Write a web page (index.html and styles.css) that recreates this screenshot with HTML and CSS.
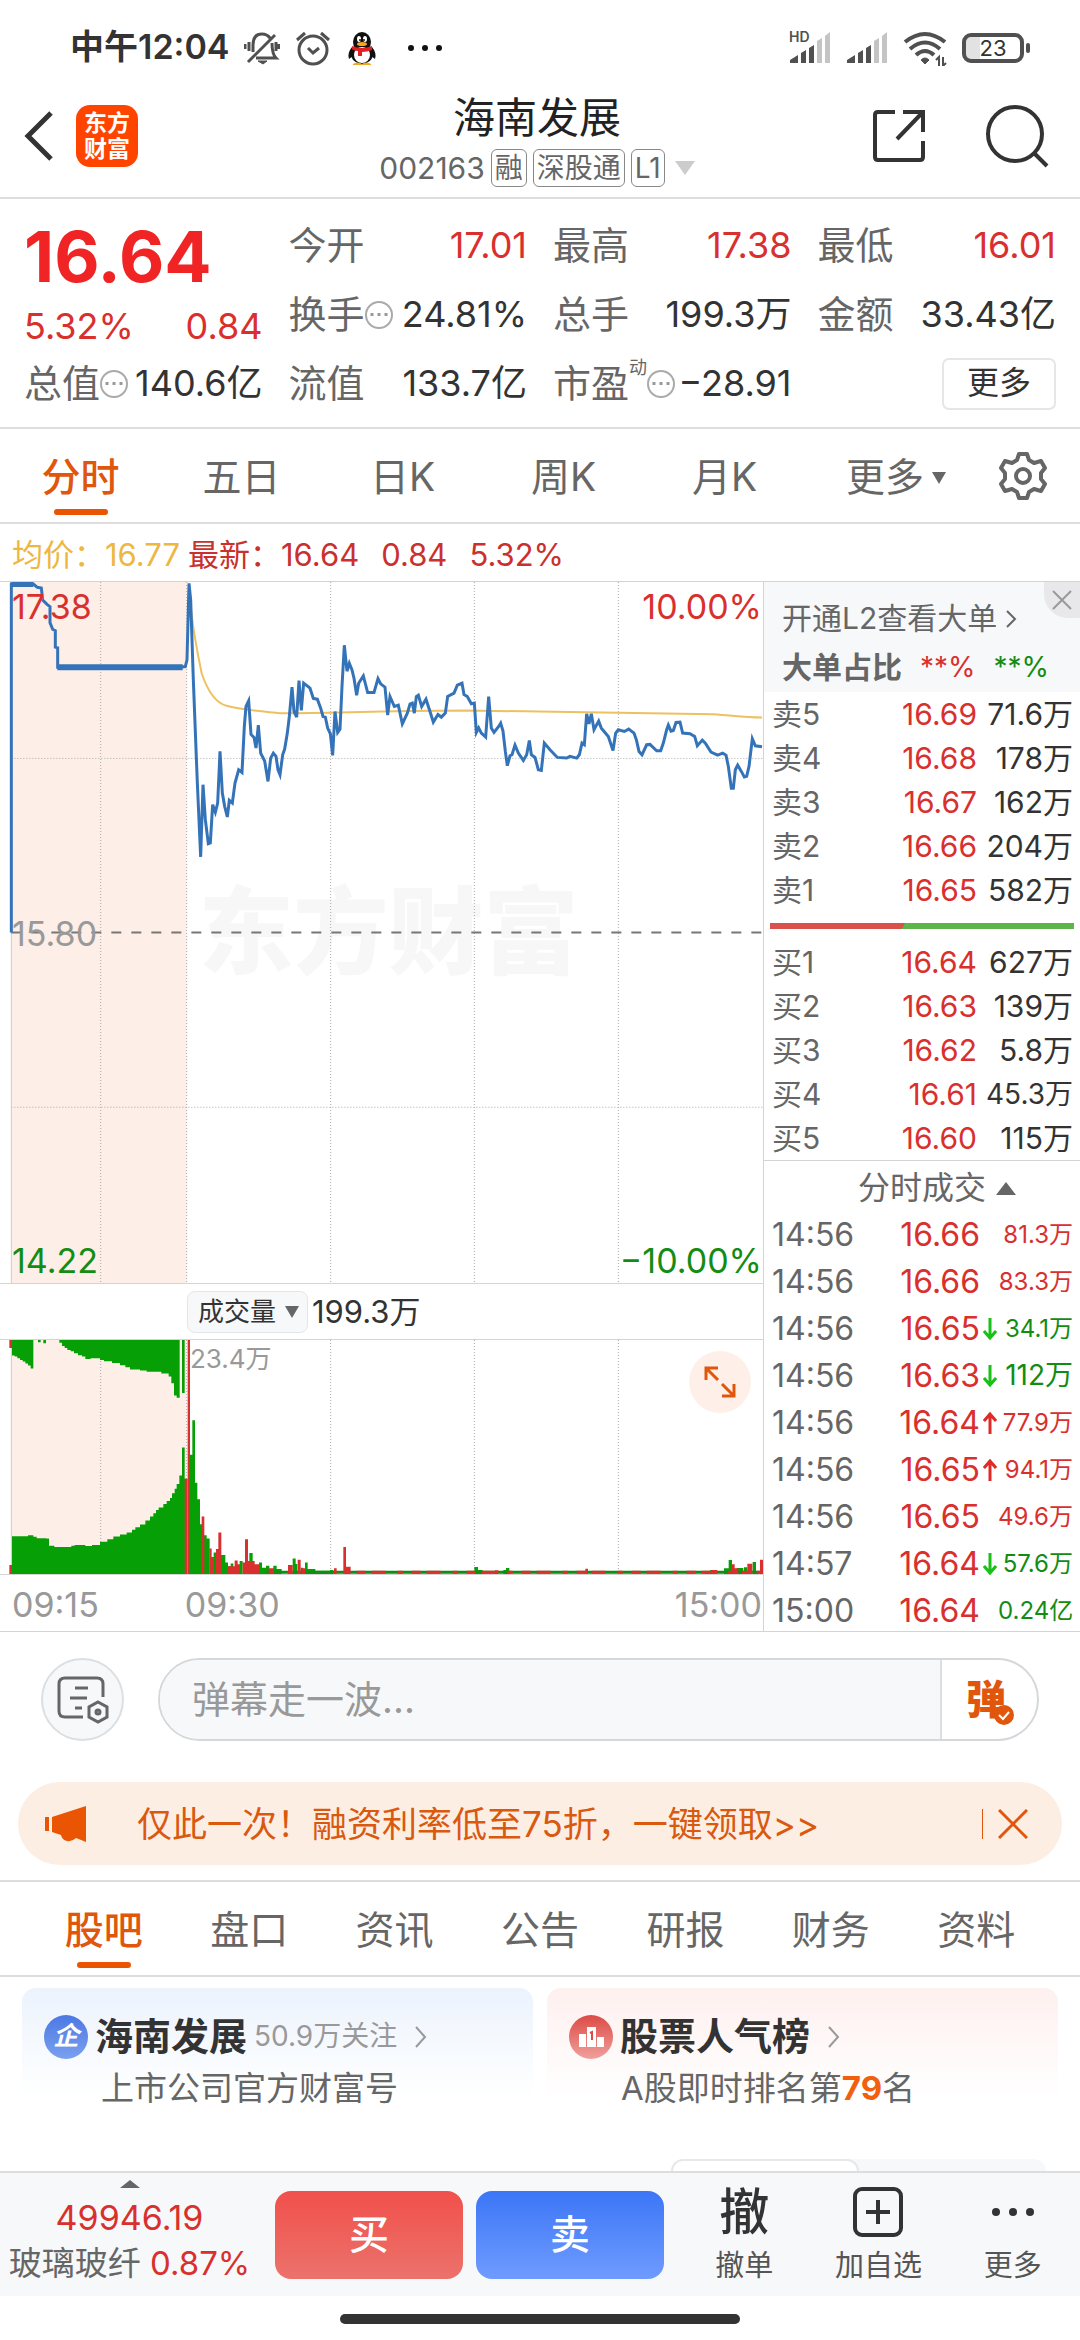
FILE: index.html
```html
<!DOCTYPE html>
<html lang="zh-CN">
<head>
    <meta charset="UTF-8">
    <meta name="viewport" content="width=device-width, initial-scale=1.0">
    <title>海南发展 002163</title>
    <link rel="stylesheet" href="styles.css">
</head>
<body>
    <!-- Status bar -->
    <div class="status">
        <div class="status-side">
            <span class="clock">中午12:04</span>
            <svg width="36" height="36" viewBox="0 0 36 36" fill="none" stroke="#505050" stroke-width="3">
                <path d="M9 22V15C9 7 13 4 18 4q5 0 8 4M28 13c0 8 1 12 4 15H12M31 5L4 32M5 12v9M1 14v5M32 12v9M35 14v5"/>
                <path d="M14 31h9l-4 3z" fill="#505050" stroke-width="1"/>
            </svg>
            <svg width="36" height="36" viewBox="0 0 36 36" fill="none" stroke="#505050" stroke-width="3">
                <circle cx="18" cy="20" r="14"/>
                <path d="M2 10l8-7M34 10l-8-7M13 18l5 5 6-5"/>
            </svg>
            <svg width="32" height="36" viewBox="0 0 32 36">
                <path d="M6 17q-5 6-3 12l4-3zM26 17q5 6 3 12l-4-3z" fill="#111"/>
                <ellipse cx="16" cy="24" rx="11" ry="10" fill="#111"/>
                <ellipse cx="16" cy="12" rx="9" ry="10" fill="#111"/>
                <ellipse cx="16" cy="25" rx="8" ry="8" fill="#fff"/>
                <ellipse cx="13" cy="9" rx="2" ry="3" fill="#fff"/>
                <ellipse cx="19" cy="9" rx="2" ry="3" fill="#fff"/>
                <circle cx="14" cy="10" r="1" fill="#111"/>
                <circle cx="18" cy="10" r="1" fill="#111"/>
                <ellipse cx="16" cy="14" rx="5" ry="2" fill="#f5a623"/>
                <path d="M6 16q10 4 20 0v4q-5 2-10 2v4h-4v-5q-4 0-6-2z" fill="#e02020"/>
                <path d="M7 34q4-3 9 0 5-3 9 0v1H7z" fill="#f5a623"/>
            </svg>
            <svg class="status-dots" width="36" height="36" viewBox="0 0 36 36" fill="#111">
                <circle cx="4" cy="18" r="3"/><circle cx="18" cy="18" r="3"/><circle cx="32" cy="18" r="3"/>
            </svg>
        </div>
        <div class="status-side">
            <div class="signal">
                <span class="hd">HD</span>
                <svg width="42" height="36" viewBox="0 0 42 36">
                    <path d="M1 33v-3l8-5v8zM12 33V23l5-3v13zM20 33V18l5-3v18z" fill="#505050"/>
                    <path d="M28 33V11l5-3v25zM36 33V6l5-4v31z" fill="#c4c4c4"/>
                </svg>
            </div>
            <svg width="42" height="36" viewBox="0 0 42 36">
                <path d="M1 33v-3l8-5v8zM12 33V23l5-3v13zM20 33V18l5-3v18z" fill="#505050"/>
                <path d="M28 33V11l5-3v25zM36 33V6l5-4v31z" fill="#c4c4c4"/>
            </svg>
            <svg width="44" height="36" viewBox="0 0 44 36" fill="none" stroke="#505050" stroke-width="4">
                <path d="M2 12q20-16 40 0M7 19q15-13 30 0M13 25q9-8 18 0"/>
                <path d="M18 30q4-4 8 0l-4 4z" fill="#505050" stroke-width="1"/>
                <path d="M36 36v-9l-3 3M40 27v9l3-3" stroke-width="2"/>
            </svg>
            <div class="battery">23</div>
        </div>
    </div>

    <!-- Title -->
    <header class="header">
        <div class="header-left">
            <button class="icon-btn" aria-label="返回">
                <svg width="30" height="52" viewBox="0 0 30 52" fill="none" stroke="#333" stroke-width="5"><path d="M27 3L4 26l23 23"/></svg>
            </button>
            <a class="logo" href="#"><span>东方</span><span>财富</span></a>
        </div>
        <div class="title">
            <h1>海南发展</h1>
            <div class="subtitle">
                <span class="code">002163</span>
                <span class="badge">融</span>
                <span class="badge">深股通</span>
                <span class="badge">L1</span>
                <i class="tri-down tri-light"></i>
            </div>
        </div>
        <div class="header-right">
            <button class="icon-btn" aria-label="分享">
                <svg width="56" height="56" viewBox="0 0 56 56" fill="none" stroke="#333" stroke-width="4">
                    <path d="M23 4H6q-3 0-3 3v42q0 3 3 3h42q3 0 3-3V33M31 4h20v20M51 4L25 31"/>
                </svg>
            </button>
            <button class="icon-btn" aria-label="搜索">
                <svg width="66" height="66" viewBox="0 0 66 66" fill="none" stroke="#333" stroke-width="4">
                    <circle cx="31" cy="31" r="27"/><path d="M50 50l13 13"/>
                </svg>
            </button>
        </div>
    </header>

    <!-- Quote -->
    <section class="quote">
        <div class="price-box">
            <strong class="price">16.64</strong>
            <div class="change"><span>5.32%</span><span>0.84</span></div>
        </div>
        <div class="item"><span class="name">今开</span><span class="up">17.01</span></div>
        <div class="item"><span class="name">最高</span><span class="up">17.38</span></div>
        <div class="item"><span class="name">最低</span><span class="up">16.01</span></div>
        <div class="item"><span class="name">换手<i class="hint"></i></span><span>24.81%</span></div>
        <div class="item"><span class="name">总手</span><span>199.3万</span></div>
        <div class="item"><span class="name">金额</span><span>33.43亿</span></div>
        <div class="item"><span class="name">总值<i class="hint"></i></span><span>140.6亿</span></div>
        <div class="item"><span class="name">流值</span><span>133.7亿</span></div>
        <div class="item"><span class="name">市盈<sup>动</sup><i class="hint"></i></span><span>−28.91</span></div>
        <div class="item item-end"><button class="more-btn">更多</button></div>
    </section>

    <nav class="tabs">
        <button class="tab active">分时</button>
        <button class="tab">五日</button>
        <button class="tab">日K</button>
        <button class="tab">周K</button>
        <button class="tab">月K</button>
        <button class="tab tab-more">更多<i class="tri-down tri-small"></i></button>
        <button class="gear" aria-label="设置">
            <svg width="50" height="50" viewBox="0 0 50 50" fill="none" stroke="#666" stroke-width="4" stroke-linejoin="round">
                <path d="M21 3h8l2 6 5 3 7-2 4 7-4 5v6l4 5-4 7-7-2-5 3-2 6h-8l-2-6-5-3-7 2-4-7 4-5v-6l-4-5 4-7 7 2 5-3z"/>
                <circle cx="25" cy="25" r="7"/>
            </svg>
        </button>
    </nav>

    <div class="info">
        <span class="avg">均价：16.77</span>
        <span class="last">最新：16.64</span>
        <span class="last">0.84</span>
        <span class="last">5.32%</span>
    </div>

    <main class="main">
        <div class="charts">
            <div class="price-chart">
                <div class="watermark">东方财富</div>
                <svg class="plot" viewBox="0 36 2289 2106" preserveAspectRatio="none">
                    <rect x="34" y="36" width="526" height="2106" fill="#fdeee7"/>
                    <path class="grid" d="M302 36V2142M560 36V2142M992 36V2142M1423 36V2142M1855 36V2142M34 566H2289M34 1614H2289"/>
                    <path class="axis" d="M34 36V2142"/>
                    <path class="mid" d="M34 1089H2289"/>
                    <path class="avg-line" d="M566 60C575 150 590 240 605 310 625 370 650 400 680 408 720 420 780 424 840 430 1000 430 1100 424 1400 422 1600 426 1800 430 2140 433 2200 437 2230 443 2286 443"/>
                    <path class="pre-line" d="M34 42H100M172 292H548"/>
                    <polyline class="price-line" points="34,1089 34,42 100,42 112,52 124,54 128,90 142,104 150,110 150,158 158,178 166,182 166,232 173,234 173,292 540,292 556,290 561,270 567,40 572,90 580,330 592,640 602,862 609,645 616,750 625,822 631,820 638,705 646,728 653,700 660,545 667,670 674,710 682,742 688,692 697,700 705,640 716,600 726,608 733,470 738,410 746,393 753,494 762,503 768,535 775,466 782,550 794,574 804,635 812,565 820,550 828,560 834,600 840,615 848,555 854,538 862,490 868,440 876,352 882,425 890,442 897,332 904,422 911,340 930,355 940,386 952,388 962,415 969,440 976,442 983,475 991,492 998,557 1005,425 1013,488 1020,478 1026,350 1033,226 1041,304 1048,280 1056,300 1062,325 1070,376 1076,340 1090,318 1103,368 1122,368 1134,326 1142,342 1155,352 1163,436 1170,380 1183,410 1195,406 1207,462 1222,430 1230,403 1237,400 1243,430 1249,380 1255,376 1265,410 1278,388 1290,425 1300,457 1314,434 1324,442 1336,430 1343,380 1362,370 1372,346 1386,340 1392,374 1402,380 1414,402 1423,400 1429,488 1436,474 1444,490 1457,502 1466,380 1474,475 1482,488 1496,470 1502,460 1509,484 1516,545 1522,588 1530,558 1536,555 1545,526 1555,550 1570,572 1580,555 1588,512 1594,555 1605,563 1615,600 1624,602 1633,520 1650,540 1672,563 1700,565 1710,560 1730,565 1738,555 1746,520 1753,525 1760,432 1767,462 1774,432 1782,480 1796,454 1804,475 1825,500 1839,542 1847,490 1855,480 1873,485 1886,478 1902,490 1909,510 1917,545 1926,555 1940,525 1950,524 1970,543 1982,543 1990,520 2000,480 2005,466 2013,484 2020,482 2028,458 2040,457 2048,490 2070,492 2084,500 2092,528 2107,511 2116,520 2133,547 2153,556 2168,550 2178,556 2185,590 2194,656 2200,656 2206,600 2213,586 2224,605 2233,622 2240,620 2247,590 2257,507 2266,528 2286,531"/>
                </svg>
                <span class="label top-left up">17.38</span>
                <span class="label top-right up">10.00%</span>
                <span class="label mid-left">15.80</span>
                <span class="label bottom-left down">14.22</span>
                <span class="label bottom-right down">−10.00%</span>
            </div>
            <div class="volume-head">
                <select class="indicator" aria-label="指标">
                    <option>成交量</option>
                </select>
                <span>199.3万</span>
            </div>
            <div class="volume-chart">
                <svg class="plot" viewBox="0 210 2289 705" preserveAspectRatio="none">
                    <rect x="34" y="210" width="526" height="705" fill="#fdeee7"/>
                    <path class="grid" d="M302 210V915M560 210V915M992 210V915M1423 210V915M1855 210V915"/>
                    <path class="axis" d="M34 210V915"/>
                    <!-- auction volume, upper and lower side -->
                    <path class="vol-green" d="M36 210V257H44V260H52V265H60V270H68V275H76V281H84V287H92V296H100V210ZM114 210V217H122V210ZM130 210V220H138V210ZM178 210V218H186V228H194V234H202V240H212V244H222V250H234V256H246V260H256V267H272V265H300V270H312V274H336V279H360V286H376V292H390V299H420V302H440V306H484V311H506V320H514V340H522V377H530V384H539V210ZM546 210V370H554V210Z"/>
                    <path class="vol-green" d="M36 915V801H84V798H100V803H110V807H138V808H147V830H163V834H214V830H224V828H256V831H276V828H300V818H322V810H340V802H360V796H380V790H396V782H406V774H420V766H436V754H450V742H460V732H468V722H476V715H490V704H500V695H510V686H516V672H524V658H530V644H538V618H546V534H554V628H562V915ZM570 915V556H577V452H585V640H592V690H600V765H607V915ZM612 915V798H620V808H629V915ZM641 915V850H648V915ZM662 915V858H676V880H684V892H692V883H700V915ZM719 915V876H728V915ZM748 915V852H758V890H766V915ZM777 915V880H786V896H798V890H808V915ZM820 915V890H830V900H845V915ZM878 915V868H887V885H892V915ZM902 915V896H910V915ZM915 915V880H923V900H946V905H990V903H1000V915ZM1423 915V894H1434V903H1448V915ZM1510 915V903H1518V897H1528V915ZM2115 915V906H2130V903H2136V915ZM2172 915V898H2186V873H2196V915ZM2210 915V897H2230V915ZM2232 915V895H2242V915ZM2258 915V879H2268V906H2276V915Z"/>
                    <path class="base-green" d="M800 910H2280"/>
                    <path class="base-red" d="M1070 910H2280"/>
                    <path class="vol-red" d="M28 210V234H36V210ZM28 888H36V915H28ZM554 628H562V915H554ZM563 210H570V915H563ZM605 742H613V915H605ZM628 838H635V864H642V915H628ZM648 840H655V790H664V915H648ZM684 892H704V874H713V886H720V915H684ZM728 880H735V810H744V876H764V886H778V915H728ZM806 898H822V915H806ZM864 888H878V915H864ZM893 872H902V915H893ZM906 898H915V915H906ZM1002 898H1010V915H1002ZM1030 834H1038V893H1052V915H1030ZM1485 904H1495V915H1485ZM1756 899H1764V915H1756ZM2134 903H2152V915H2134ZM2195 886H2204V898H2215V915H2195ZM2242 884H2257V915H2242ZM2280 872H2289V915H2280Z"/>
                </svg>
                <span class="max-volume">23.4万</span>
                <button class="expand" aria-label="全屏">
                    <svg width="34" height="34" viewBox="0 0 34 34" fill="none" stroke="#e0560c" stroke-width="3"><path d="M3 15V3h12M3 3l12 12M31 19v12H19M31 31L19 19"/></svg>
                </button>
            </div>
            <div class="times"><span>09:15</span><span>09:30</span><span class="time-end">15:00</span></div>
        </div>

        <aside class="side">
            <div class="promo">
                <a href="#">开通L2查看大单
                    <svg width="12" height="20" viewBox="0 0 12 20" fill="none" stroke="#666" stroke-width="2"><path d="M2 2l8 8-8 8"/></svg>
                </a>
                <div class="ratio"><b>大单占比</b><span class="up">**%</span><span class="down">**%</span></div>
                <button class="promo-close" aria-label="关闭">
                    <svg width="20" height="20" viewBox="0 0 20 20" stroke="#999" stroke-width="2"><path d="M1 1l18 18M19 1L1 19"/></svg>
                </button>
            </div>
            <table class="book">
                <tr><th>卖5</th><td class="up">16.69</td><td>71.6万</td></tr>
                <tr><th>卖4</th><td class="up">16.68</td><td>178万</td></tr>
                <tr><th>卖3</th><td class="up">16.67</td><td>162万</td></tr>
                <tr><th>卖2</th><td class="up">16.66</td><td>204万</td></tr>
                <tr><th>卖1</th><td class="up">16.65</td><td>582万</td></tr>
            </table>
            <div class="balance"></div>
            <table class="book">
                <tr><th>买1</th><td class="up">16.64</td><td>627万</td></tr>
                <tr><th>买2</th><td class="up">16.63</td><td>139万</td></tr>
                <tr><th>买3</th><td class="up">16.62</td><td>5.8万</td></tr>
                <tr><th>买4</th><td class="up">16.61</td><td class="long">45.3万</td></tr>
                <tr><th>买5</th><td class="up">16.60</td><td>115万</td></tr>
            </table>
            <button class="deals-head">分时成交<i class="tri-up"></i></button>
            <table class="deals">
                <tr><th>14:56</th><td class="up">16.66</td><td></td><td class="up">81.3万</td></tr>
                <tr><th>14:56</th><td class="up">16.66</td><td></td><td class="up">83.3万</td></tr>
                <tr><th>14:56</th><td class="up">16.65</td><td><svg class="arrow fall" viewBox="0 0 14 22"><path d="M7 0v20M1 13l6 7 6-7"/></svg></td><td class="down">34.1万</td></tr>
                <tr><th>14:56</th><td class="up">16.63</td><td><svg class="arrow fall" viewBox="0 0 14 22"><path d="M7 0v20M1 13l6 7 6-7"/></svg></td><td class="down big">112万</td></tr>
                <tr><th>14:56</th><td class="up">16.64</td><td><svg class="arrow" viewBox="0 0 14 22"><path d="M7 22V2M1 9l6-7 6 7"/></svg></td><td class="up">77.9万</td></tr>
                <tr><th>14:56</th><td class="up">16.65</td><td><svg class="arrow" viewBox="0 0 14 22"><path d="M7 22V2M1 9l6-7 6 7"/></svg></td><td class="up">94.1万</td></tr>
                <tr><th>14:56</th><td class="up">16.65</td><td></td><td class="up">49.6万</td></tr>
                <tr><th>14:57</th><td class="up">16.64</td><td><svg class="arrow fall" viewBox="0 0 14 22"><path d="M7 0v20M1 13l6 7 6-7"/></svg></td><td class="down">57.6万</td></tr>
                <tr><th>15:00</th><td class="up">16.64</td><td></td><td class="down">0.24亿</td></tr>
            </table>
        </aside>
    </main>

    <!-- Bullet comments -->
    <div class="comment">
        <button class="comment-set" aria-label="弹幕设置">
            <svg width="54" height="50" viewBox="0 0 54 50" fill="none" stroke="#666" stroke-width="3">
                <path d="M27 42H9q-6 0-6-6V9q0-6 6-6h32q6 0 6 6v13M19 13h13M14 23h17M19 33h7"/>
                <path d="M42 27l9 5v10l-9 5-9-5V32z"/><circle cx="42" cy="37" r="2"/>
            </svg>
        </button>
        <div class="comment-box">
            <input type="text" placeholder="弹幕走一波..." aria-label="弹幕">
            <button class="comment-toggle" aria-label="弹幕开关">弹
                <svg width="20" height="20" viewBox="0 0 20 20"><circle cx="10" cy="10" r="10" fill="#e0560c"/><path d="M5 10l4 4 6-7" fill="none" stroke="#fff" stroke-width="2"/></svg>
            </button>
        </div>
    </div>

    <div class="banner">
        <svg width="44" height="38" viewBox="0 0 44 38" fill="#ea5504"><path d="M1 12h4v14H1zM8 12L42 1v36l-10-4q-4 4-9 3-5-1-6-6l-9-3z"/></svg>
        <a href="#">仅此一次！融资利率低至75折，一键领取&gt;&gt;</a>
        <button class="banner-close" aria-label="关闭">
            <svg width="30" height="30" viewBox="0 0 30 30" stroke="#e0560c" stroke-width="3"><path d="M1 1l28 28M29 1L1 29"/></svg>
        </button>
    </div>

    <nav class="tabs section-tabs">
        <button class="tab active">股吧</button>
        <button class="tab">盘口</button>
        <button class="tab">资讯</button>
        <button class="tab">公告</button>
        <button class="tab">研报</button>
        <button class="tab">财务</button>
        <button class="tab">资料</button>
    </nav>

    <section class="cards">
        <a class="card card-blue" href="#">
            <div class="card-title">
                <span class="card-icon">企</span>
                <b>海南发展</b><small>50.9万关注</small>
                <svg width="14" height="24" viewBox="0 0 14 24" fill="none" stroke="#999" stroke-width="2"><path d="M2 2l9 10-9 10"/></svg>
            </div>
            <p>上市公司官方财富号</p>
        </a>
        <a class="card card-red" href="#">
            <div class="card-title">
                <svg width="44" height="44" viewBox="0 0 44 44">
                    <defs><linearGradient id="rank" x1="0" y1="0" x2="0" y2="1"><stop offset="0" stop-color="#dc4b46"/><stop offset="1" stop-color="#f0a09c"/></linearGradient></defs>
                    <circle cx="22" cy="22" r="22" fill="url(#rank)"/>
                    <path d="M10 19h7v13h-7zM18 12h9v20h-9zM28 22h7v10h-7z" fill="#fff"/>
                    <path d="M21 18l2-1v8" fill="none" stroke="#dc4b46" stroke-width="2"/>
                </svg>
                <b>股票人气榜</b>
                <svg width="14" height="24" viewBox="0 0 14 24" fill="none" stroke="#999" stroke-width="2"><path d="M2 2l9 10-9 10"/></svg>
            </div>
            <p>A股即时排名第<em>79</em>名</p>
        </a>
    </section>
    <div class="switch"><span></span></div>

    <footer class="bottom">
        <div class="index">
            <i class="tri-up tri-up-small"></i>
            <span class="up">49946.19</span>
            <div class="index-name">玻璃玻纤 <span class="up">0.87%</span></div>
        </div>
        <button class="trade buy">买</button>
        <button class="trade sell">卖</button>
        <button class="action"><span class="glyph">撤</span>撤单</button>
        <button class="action">
            <svg width="52" height="52" viewBox="0 0 52 52" fill="none" stroke="#333" stroke-width="4"><rect x="3" y="3" width="46" height="46" rx="7"/><path d="M26 14v24M14 26h24"/></svg>
            加自选
        </button>
        <button class="action">
            <svg width="52" height="52" viewBox="0 0 52 52" fill="#333"><circle cx="9" cy="26" r="4"/><circle cx="26" cy="26" r="4"/><circle cx="43" cy="26" r="4"/></svg>
            更多
        </button>
    </footer>
    <div class="home"><i></i></div>
</body>
</html>
```
FILE: styles.css
```css
* {
    box-sizing: border-box;
}

body {
    margin: 0;
    background-color: #fff;
    color: #333;
    font-family: Inter, "Noto Sans CJK SC", sans-serif;
    font-size: 36px;
    line-height: 1.2;
}

button, input, select {
    margin: 0;
    padding: 0;
    border: none;
    background: none;
    color: inherit;
    font: inherit;
}

a {
    color: inherit;
    text-decoration: none;
}

svg {
    display: block;
    flex-shrink: 0;
}

.up {
    color: #d9302e;
}

.down {
    color: #138c13;
}

/* triangles */
.tri-down, .tri-up {
    display: inline-block;
    border: 10px solid transparent;
}

.tri-down {
    border-top: 14px solid #666;
    border-bottom: none;
}

.tri-light {
    border-top-color: #ccc;
    margin-left: 4px;
}

.tri-small {
    border-width: 12px 7px 0;
    margin: 0 20px 0 8px;
}

.tri-up {
    border-bottom: 13px solid #666;
    border-top: none;
}

.tri-up-small {
    border-bottom-width: 8px;
}

/* status bar */
.status {
    display: flex;
    justify-content: space-between;
    height: 95px;
    padding: 0 56px 0 70px;
}

.status-side {
    display: flex;
    align-items: center;
    gap: 15px;
}

.clock {
    font-size: 34px;
    font-weight: 600;
}

.status-dots {
    margin-left: 14px;
}

.signal {
    position: relative;
}

.hd {
    position: absolute;
    top: -2px;
    left: 0;
    color: #505050;
    font-size: 14px;
    font-weight: 600;
    line-height: 18px;
}

.battery {
    position: relative;
    width: 62px;
    height: 30px;
    border: 4px solid #505050;
    border-radius: 9px;
    background: linear-gradient(90deg, #e2e2e2 14px, #fff 14px);
    font-size: 22px;
    line-height: 22px;
    text-align: center;
}

.battery::after {
    content: "";
    position: absolute;
    right: -10px;
    top: 6px;
    width: 4px;
    height: 10px;
    border-radius: 2px;
    background-color: #505050;
}

/* header */
.header {
    display: grid;
    grid-template-columns: 1fr auto 1fr;
    height: 104px;
    padding: 0 30px 0 24px;
    border-bottom: 2px solid #ddd;
}

.header-left, .header-right {
    display: flex;
    align-items: center;
    padding-bottom: 20px;
}

.header-left {
    gap: 22px;
}

.header-right {
    justify-content: flex-end;
    gap: 56px;
}

.logo {
    display: flex;
    flex-direction: column;
    justify-content: center;
    width: 62px;
    height: 62px;
    border-radius: 14px;
    background-color: #ff4400;
    color: #fff;
    font-size: 23px;
    font-weight: 700;
    line-height: 26px;
    text-align: center;
}

.title {
    text-align: center;
}

.title h1 {
    margin: 0;
    color: #222;
    font-size: 42px;
    font-weight: 400;
    line-height: 46px;
}

.subtitle {
    display: flex;
    align-items: center;
    gap: 6px;
    height: 50px;
    padding-top: 4px;
    color: #666;
    font-size: 30px;
}

.badge {
    height: 38px;
    padding: 0 3px;
    border: 1px solid #888;
    border-radius: 6px;
    font-size: 28px;
    line-height: 36px;
}

/* quote */
.quote {
    display: grid;
    grid-template-columns: repeat(4, 1fr);
    grid-auto-rows: 69px;
    column-gap: 26px;
    height: 230px;
    padding: 12px 24px 0;
    border-bottom: 2px solid #ddd;
}

.price-box {
    grid-row: span 2;
    color: #f02424;
}

.price {
    display: block;
    font-size: 70px;
    font-weight: 700;
    line-height: 92px;
}

.change {
    display: flex;
    justify-content: space-between;
    color: #d9302e;
    font-size: 36px;
    line-height: 46px;
}

.item {
    display: flex;
    align-items: center;
    justify-content: space-between;
    font-size: 36px;
    white-space: nowrap;
}

.name {
    display: flex;
    align-items: center;
    color: #666;
    font-size: 38px;
}

.name sup {
    align-self: flex-start;
    font-size: 18px;
    line-height: 14px;
}

.item-end {
    justify-content: flex-end;
}

/* three dots in a circle */
.hint {
    width: 28px;
    height: 28px;
    border: 2px solid #aaa;
    border-radius: 50%;
    background: radial-gradient(circle, #999 2px, transparent 2px) center / 7px 7px repeat-x;
}

.more-btn {
    width: 114px;
    height: 52px;
    border: 2px solid #e6e6e6;
    border-radius: 7px;
    font-size: 32px;
}

/* tabs */
.tabs {
    display: flex;
    height: 95px;
    border-bottom: 2px solid #ddd;
    color: #666;
    font-size: 39px;
}

.tab {
    position: relative;
    flex: 1;
    padding-top: 4px;
}

.tab.active {
    color: #e0560c;
    font-weight: 500;
}

.tab.active::after {
    content: "";
    position: absolute;
    left: 50%;
    bottom: 7px;
    width: 54px;
    height: 6px;
    margin-left: -27px;
    border-radius: 3px;
    background-color: #ea5504;
}

.tab-more {
    display: flex;
    align-items: center;
    justify-content: flex-end;
}

.gear {
    display: grid;
    place-items: center;
    width: 114px;
}

.info {
    display: flex;
    align-items: center;
    height: 58px;
    padding: 4px 12px 0;
    border-bottom: 1px solid #d4d4d4;
    font-size: 31px;
    gap: 22px;
}

.avg {
    margin-right: -14px;
    color: #edb740;
}

.last {
    color: #c9302e;
}

/* charts */
.main {
    display: flex;
    border-bottom: 1px solid #d4d4d4;
}

.charts {
    flex: 1;
    border-right: 1px solid #d4d4d4;
}

.price-chart, .volume-chart {
    position: relative;
    border-bottom: 1px solid #d4d4d4;
}

.price-chart {
    height: 702px;
}

.plot {
    width: 100%;
    height: 100%;
}

.plot path, .plot polyline {
    fill: none;
    vector-effect: non-scaling-stroke;
}

.plot .grid {
    stroke: #aaa;
    stroke-dasharray: 1 2;
}

.plot .axis {
    stroke: #ccc;
}

.plot .mid {
    stroke: #777;
    stroke-width: 2;
    stroke-dasharray: 10 10;
}

.plot .avg-line {
    stroke: #edc15f;
    stroke-width: 2;
}

.plot .price-line {
    stroke: #3573b9;
    stroke-width: 3;
}

.plot .pre-line {
    stroke: #3573b9;
    stroke-width: 6;
}

.plot .vol-green {
    fill: #06a006;
}

.plot .vol-red {
    fill: #d9302e;
}

.plot .base-green {
    stroke: #138c13;
    stroke-width: 3;
}

.plot .base-red {
    stroke: #d9302e;
    stroke-width: 3;
    stroke-dasharray: 9 6 14 12 5 9;
}

.watermark {
    position: absolute;
    left: 26%;
    top: 296px;
    z-index: -1;
    color: #f7f7f7;
    font-size: 95px;
    font-weight: 900;
    line-height: 110px;
}

.label {
    position: absolute;
    font-size: 34px;
    line-height: 40px;
}

.top-left {
    top: 5px;
    left: 12px;
}

.top-right {
    top: 5px;
    right: 1px;
}

.mid-left {
    top: 332px;
    left: 12px;
    color: #999;
}

.bottom-left {
    bottom: 2px;
    left: 12px;
}

.bottom-right {
    bottom: 2px;
    right: 1px;
}

.volume-head {
    display: flex;
    align-items: center;
    gap: 4px;
    height: 56px;
    padding-left: 187px;
    border-bottom: 1px solid #d4d4d4;
    font-size: 31px;
}

.indicator {
    appearance: none;
    width: 121px;
    height: 42px;
    padding-left: 10px;
    border: 1px solid #e3e5e8;
    border-radius: 8px;
    background: #f7f8fa url("data:image/svg+xml,%3Csvg xmlns='http://www.w3.org/2000/svg' width='14' height='12'%3E%3Cpath d='M0 0h14l-7 12z' fill='%23666'/%3E%3C/svg%3E") no-repeat right 8px center;
    font-size: 26px;
}

.volume-chart {
    height: 235px;
}

.max-volume {
    position: absolute;
    top: 3px;
    left: 190px;
    color: #999;
    font-size: 26px;
}

.expand {
    position: absolute;
    top: 11px;
    right: 12px;
    display: grid;
    place-items: center;
    width: 62px;
    height: 62px;
    border-radius: 50%;
    background-color: #fef0e9;
}

.times {
    display: flex;
    height: 56px;
    padding: 0 1px 0 12px;
    color: #999;
    font-size: 34px;
    line-height: 60px;
    gap: 86px;
}

.time-end {
    margin-left: auto;
}

/* order book */
.side {
    width: 316px;
}

.promo {
    position: relative;
    height: 110px;
    padding: 12px 0 0 18px;
    background-color: #f7f8fa;
    color: #666;
    font-size: 30px;
    line-height: 49px;
}

.promo a {
    display: flex;
    align-items: center;
    gap: 8px;
}

.ratio {
    display: flex;
    gap: 18px;
}

.ratio span {
    font-size: 28px;
}

.promo-close {
    position: absolute;
    top: 0;
    right: 0;
    display: grid;
    place-items: center;
    width: 36px;
    height: 36px;
    border-bottom-left-radius: 24px;
    background-color: #e8e8ea;
}

table {
    width: 100%;
    border-collapse: collapse;
    table-layout: fixed;
}

th, td {
    padding: 0;
    font-weight: 400;
    text-align: right;
    white-space: nowrap;
}

th {
    padding-left: 8px;
    color: #666;
    text-align: left;
}

.book {
    font-size: 30px;
    line-height: 44px;
}

.book th {
    width: 100px;
}

.book td:last-child {
    width: 103px;
    padding-right: 7px;
}

.book td.long {
    font-size: 28px;
}

.balance {
    height: 6px;
    margin: 11px 6px;
    background: linear-gradient(120deg, #d9504d 44%, #5fb54a 44%);
}

.deals-head {
    display: flex;
    align-items: center;
    justify-content: center;
    gap: 10px;
    width: 100%;
    height: 51px;
    padding: 4px 0 0 30px;
    border-top: 1px solid #d4d4d4;
    color: #666;
    font-size: 32px;
}

.deals {
    margin-bottom: -3px;
    font-size: 32px;
    line-height: 47px;
}

.deals tr {
    height: 47px;
}

.deals th {
    width: 96px;
}

.deals td:nth-child(3) {
    width: 18px;
    padding-left: 3px;
}

.deals td:last-child {
    width: 82px;
    padding-right: 7px;
    font-size: 24px;
}

.deals td.big {
    font-size: 28px;
}

.arrow {
    width: 14px;
    height: 22px;
    fill: none;
    stroke: #e02a28;
    stroke-width: 3;
}

.fall {
    stroke: #18c018;
}

/* comments */
.comment {
    display: flex;
    gap: 34px;
    padding: 26px 41px 0 41px;
}

.comment-set {
    display: grid;
    place-items: center;
    width: 83px;
    height: 83px;
    border: 2px solid #dcdfe2;
    border-radius: 50%;
    background-color: #f7f8fa;
}

.comment-box {
    display: flex;
    flex: 1;
    height: 83px;
    border: 2px solid #d5d8db;
    border-radius: 42px;
    overflow: hidden;
}

.comment-box input {
    flex: 1;
    min-width: 0;
    padding-left: 32px;
    background-color: #f7f8fa;
    font-size: 38px;
}

.comment-box input::placeholder {
    color: #999;
}

.comment-toggle {
    display: flex;
    align-items: center;
    width: 97px;
    padding-left: 24px;
    border-left: 2px solid #dcdfe2;
    color: #e0560c;
    font-size: 40px;
    font-weight: 900;
}

.comment-toggle svg {
    margin: 30px 0 0 -12px;
}

.banner {
    display: flex;
    align-items: center;
    height: 83px;
    margin: 41px 18px 15px;
    padding: 0 34px 0 26px;
    border-radius: 42px;
    background-color: #fdeee4;
    color: #d9590f;
    font-size: 35px;
}

.banner a {
    flex: 1;
    margin-left: 49px;
}

.banner-close {
    padding-left: 15px;
    border-left: 1px solid #e0560c;
}

.section-tabs {
    height: 97px;
    padding: 0 31px;
    border-top: 2px solid #ddd;
}

/* cards */
.cards {
    display: grid;
    grid-template-columns: 1fr 1fr;
    gap: 14px;
    height: 182px;
    padding: 11px 22px 0;
}

.card {
    height: 130px;
    padding: 26px 22px 0;
    border-radius: 14px;
}

.card-blue {
    background: linear-gradient(#ecf3fd, #fff 110px);
}

.card-red {
    background: linear-gradient(#fef0ef, #fff 110px);
}

.card-title {
    display: flex;
    align-items: center;
    height: 46px;
    gap: 7px;
    font-size: 38px;
}

.card-title small {
    color: #999;
    font-size: 28px;
}

.card-title svg:last-child {
    margin-left: 10px;
}

.card-icon {
    width: 44px;
    height: 44px;
    border-radius: 50%;
    background: linear-gradient(#4c78e4, #7aa0ee);
    color: #fff;
    font-size: 26px;
    font-style: italic;
    font-weight: 700;
    line-height: 42px;
    text-align: center;
}

.card p {
    margin: 5px 0 0 52px;
    color: #666;
    font-size: 33px;
    line-height: 46px;
}

.card-blue p {
    margin-left: 57px;
}

.card em {
    color: #f0600f;
    font-style: normal;
    font-weight: 700;
}

/* upper edge of the sort switch */
.switch {
    width: 375px;
    height: 12px;
    margin: 0 34px 0 auto;
    border-radius: 12px 12px 0 0;
    background-color: #f7f8fa;
}

.switch span {
    display: block;
    width: 50%;
    height: 12px;
    border: 2px solid #e8e8ea;
    border-bottom: none;
    border-radius: 12px 12px 0 0;
    background-color: #fff;
}

/* bottom bar */
.bottom {
    display: flex;
    align-items: center;
    height: 125px;
    border-top: 2px solid #ddd;
    background-color: #f7f8fa;
}

.index {
    display: flex;
    flex-direction: column;
    align-items: center;
    align-self: stretch;
    width: 259px;
    margin-right: 16px;
    padding-top: 7px;
    font-size: 34px;
}

.index > span {
    margin-top: 8px;
    line-height: 44px;
}

.index-name {
    color: #666;
    font-size: 33px;
    line-height: 46px;
    white-space: nowrap;
}

.trade {
    width: 188px;
    height: 88px;
    margin-right: 13px;
    border-radius: 16px;
    color: #fff;
    font-size: 40px;
    font-weight: 500;
}

.buy {
    background: linear-gradient(#f1504b, #ec726c);
}

.sell {
    background: linear-gradient(#3c76f6, #6f9bff);
}

.action {
    display: flex;
    flex: 1;
    flex-direction: column;
    align-items: center;
    gap: 10px;
    color: #555;
    font-size: 29px;
    line-height: 36px;
}

.glyph {
    color: #333;
    font-size: 50px;
    font-weight: 500;
    line-height: 52px;
}

.home {
    display: flex;
    justify-content: center;
    height: 44px;
    padding-top: 18px;
}

.home i {
    width: 37%;
    height: 10px;
    border-radius: 5px;
    background-color: #333;
}
```
